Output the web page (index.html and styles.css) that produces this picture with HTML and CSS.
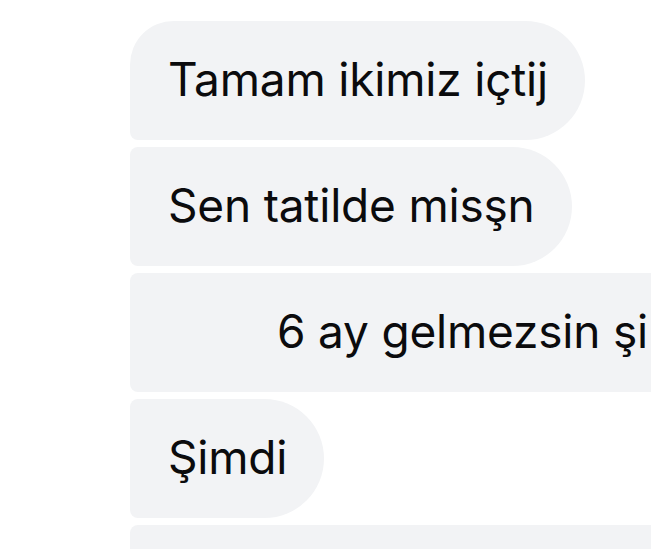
FILE: index.html
```html
<!DOCTYPE html>
<html lang="tr">
<head>
<meta charset="utf-8">
<link rel="stylesheet" href="styles.css">
</head>
<body>
<div class="thread">
  <div class="bubble first">Tamam ikimiz içtij</div>
  <div class="bubble mid">Sen tatilde misşn</div>
  <div class="bubble mid wide indent">6 ay gelmezsin şi</div>
  <div class="bubble mid">Şimdi</div>
  <div class="bubble wide tail"></div>
</div>
</body>
</html>
```
FILE: styles.css
```css
html, body {
  margin: 0;
  padding: 0;
  background: #ffffff;
  overflow: hidden;
  width: 651px;
  height: 549px;
}
.thread {
  display: flex;
  flex-direction: column;
  align-items: flex-start;
  gap: 7px;
  padding: 21px 0 0 130px;
}
.bubble {
  box-sizing: border-box;
  height: 119px;
  line-height: 117px;
  padding: 0 37px 0 38px;
  background: #f2f3f5;
  color: #0b0b0d;
  font-family: Inter, "Noto Sans", "Liberation Sans", sans-serif;
  font-size: 46px;
  letter-spacing: -0.2px;
  white-space: nowrap;
  overflow: hidden;
  flex-shrink: 0;
}
.first {
  border-radius: 44px 60px 60px 8px;
}
.mid {
  border-radius: 8px 60px 60px 8px;
}
.wide {
  width: 521px;
  padding-right: 0;
  border-radius: 8px 0 0 8px;
}
.indent {
  padding-left: 147px;
}
.tail {
  height: 24px;
  border-radius: 8px 0 0 0;
}
```
